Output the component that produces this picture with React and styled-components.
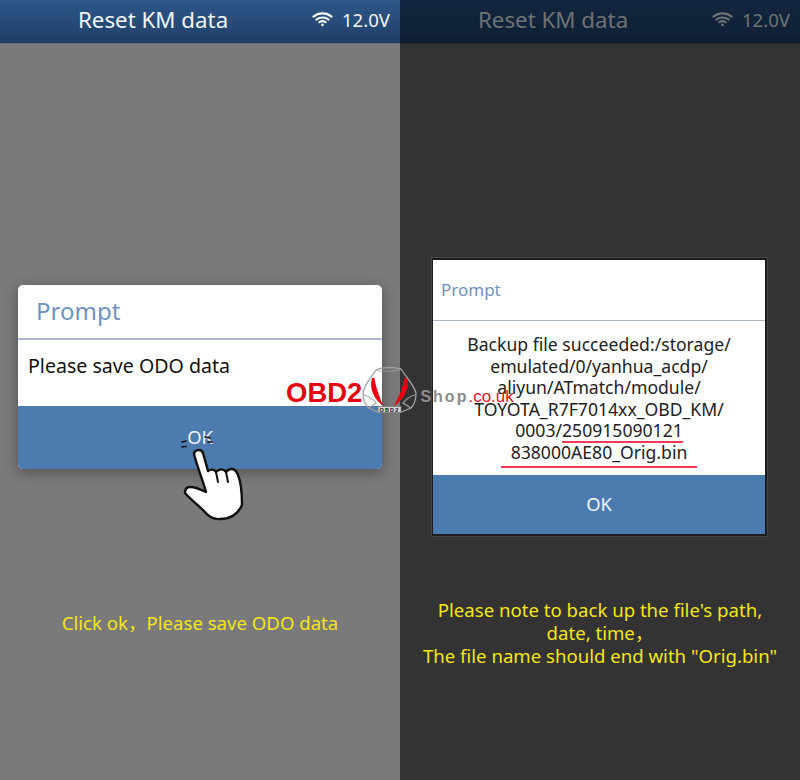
import styled, { createGlobalStyle } from "styled-components";

const Global = createGlobalStyle`
  html, body {
    margin: 0;
    padding: 0;
    background: #333;
  }
  body {
    font-family: "Noto Sans", "Noto Sans CJK SC", sans-serif;
  }
`;

const Page = styled.div`
  position: relative;
  display: flex;
  width: 800px;
  height: 780px;
  overflow: hidden;
`;

const Panel = styled.section`
  display: flex;
  flex-direction: column;
  width: 400px;
  height: 780px;
  background: ${(p) => (p.$dark ? "#333333" : "#7a7a7a")};
`;

const Header = styled.header`
  box-sizing: border-box;
  display: flex;
  align-items: center;
  height: 43px;
  padding: 0 10px 5px 78px;
  color: ${(p) => (p.$dark ? "#6f7274" : "#f2f5f8")};
  background: ${(p) =>
    p.$dark
      ? "linear-gradient(#13263f, #0f2136 80%, #0d1c2e)"
      : "linear-gradient(#2c5788, #274c79 50%, #1f3e65)"};
  box-shadow: 0 1px 0 ${(p) => (p.$dark ? "#2b2b2b" : "#6a6d72")};
`;

const Title = styled.h1`
  flex: 1;
  margin: 0;
  font-size: 22.3px;
  font-weight: 400;
`;

const Status = styled.div`
  display: flex;
  align-items: center;
  gap: 9px;
  font-size: 18.6px;
`;

const Dialog = styled.div`
  position: relative;
  display: flex;
  flex-direction: column;
  box-sizing: border-box;
  background: #fff;
`;

const LeftDialog = styled(Dialog)`
  width: 364px;
  height: 184px;
  margin: 242px 0 0 18px;
  border-radius: 5px;
  box-shadow: 0 3px 14px rgba(0, 0, 0, 0.35);
`;

const RightDialog = styled(Dialog)`
  width: 335px;
  height: 278px;
  margin: 215px 0 0 32px;
  border: 2px solid #1d1d1d;
  border-left-width: 1px;
  box-shadow: 0 0 0 1px #454545;
`;

const DialogTitle = styled.div`
  box-sizing: border-box;
  display: flex;
  align-items: center;
  color: #6f93c0;
  border-bottom: ${(p) => p.$line}px solid #a9b8cb;
  height: ${(p) => p.$h}px;
  padding: 0 0 ${(p) => p.$lift}px ${(p) => p.$pad}px;
  font-size: ${(p) => p.$size}px;
`;

const LeftBody = styled.div`
  flex: 1;
  padding: 13px 0 0 10px;
  font-size: 19.6px;
  line-height: 26px;
  color: #111;
`;

const RightBody = styled.div`
  flex: 1;
  padding-top: 13px;
  text-align: center;
  font-size: 17.6px;
  line-height: 21.5px;
  color: #222;
`;

const Underlined = styled.span`
  position: relative;

  &::after {
    content: "";
    position: absolute;
    left: ${(p) => -(p.$over || 0)}px;
    right: ${(p) => -(p.$over || 0)}px;
    bottom: ${(p) => p.$bottom}px;
    height: 2px;
    background: #ee3a56;
  }
`;

const OkButton = styled.button`
  display: block;
  width: 100%;
  border: 0;
  padding: 0 0 2px;
  color: #f1f5f9;
  background: #4c7bb0;
  font-family: inherit;
  font-size: 18.4px;
  height: ${(p) => p.$h}px;
  border-radius: ${(p) => (p.$round ? "0 0 5px 5px" : "0")};
`;

const Caption = styled.p`
  margin: 0;
  color: #f5e616;
  text-align: center;
  font-size: 18.6px;
  line-height: 23px;
`;

const LeftCaption = styled(Caption)`
  margin-top: 142px;
`;

const RightCaption = styled(Caption)`
  margin-top: 62px;
`;

const Hand = styled.svg`
  position: absolute;
  left: 147px;
  top: 135px;
`;

const Watermark = styled.div`
  position: absolute;
  left: 286px;
  top: 367px;
  display: flex;
  align-items: flex-start;
  height: 46px;
  font-family: "Liberation Sans", Arial, sans-serif;
  white-space: nowrap;
`;

const Brand = styled.span`
  color: #e60012;
  font-size: 27.5px;
  line-height: 46px;
  font-weight: 700;
  margin-top: 3px;
`;

const CarMark = styled.svg`
  flex: none;
`;

const Shop = styled.span`
  color: #8c8c8c;
  font-size: 16px;
  line-height: 46px;
  font-weight: 700;
  letter-spacing: 2px;
  margin: 7px 0 0 3px;
`;

const Domain = styled.span`
  color: #f0101e;
  font-size: 17px;
  line-height: 46px;
  margin: 7px 0 0 0;
`;

const WifiIcon = ({ color }) => (
  <svg width="21" height="16" viewBox="0 0 22 16" fill="none" stroke={color} strokeWidth="2.2" strokeLinecap="round">
    <path d="M1.5 5.5C7 1 15 1 20.5 5.5" />
    <path d="M4.5 8.6C8.2 5.6 13.8 5.6 17.5 8.6" />
    <path d="M7.6 11.4C9.6 10 12.4 10 14.4 11.4" />
    <circle cx="11" cy="14.2" r="1.4" fill={color} stroke="none" />
  </svg>
);

const CarLogo = () => (
  <CarMark width="55" height="46" viewBox="0 0 55 46" fill="none">
    <path
      d="M1 26C2 18 9 11 14 3C19 0 33 0 39 2C44 10 52 18 54 26C54 33 52 38 49 41L39 45H16L7 41C3 38 1 32 1 26Z"
      stroke="#a3a3a3"
      strokeWidth="1.3"
    />
    <path d="M14 3C22 5 32 5 39 2" stroke="#a3a3a3" strokeWidth="0.8" />
    <path d="M2 28C6 29 10 31 14 36L7 41M53 28C49 29 45 31 41 36L49 41" stroke="#a3a3a3" strokeWidth="1.2" />
    <path d="M10 11C7 22 12 32 21 39C18 30 14 22 12.5 11Z" fill="#e60012" />
    <path d="M45 11C48 22 42 32 32 39C36 30 41 22 42.5 11Z" fill="#e60012" />
    <rect x="16" y="39.5" width="23" height="6" fill="#d4d4d4" stroke="#777" strokeWidth="0.7" />
    <text x="27.5" y="44.8" textAnchor="middle" fontSize="5.5" fontWeight="700" fontFamily="Liberation Sans" letterSpacing="1.2" fill="#111">
      OBD2
    </text>
  </CarMark>
);

const App = () => (
  <>
    <Global />
    <Page>
      <Panel>
        <Header>
          <Title>Reset KM data</Title>
          <Status>
            <WifiIcon color="#f2f5f8" />
            12.0V
          </Status>
        </Header>
        <LeftDialog>
          <DialogTitle $h={55} $pad={18} $size={24} $line={2} $lift={3}>
            Prompt
          </DialogTitle>
          <LeftBody>Please save ODO data</LeftBody>
          <OkButton $h={63} $round>
            OK
          </OkButton>
          <Hand width="90" height="105" viewBox="0 0 90 105">
            <path
              d="M29 34C29 30 36 28 38 33L43 51C46 49 49 49 51 52C54 49 58 48 61 52C64 48 70 47 73 55C76 62 77 72 77 85C73 94 66 99 55 99C47 100 42 95 38 90C32 84 25 79 20 73C20 69 22 67 25 67C30 67 37 70 41 72C37 58 32 46 29 34Z"
              fill="#fff"
              stroke="#111"
              strokeWidth="2.4"
              strokeLinejoin="round"
            />
            <path d="M51 52L53 62M61 52L63 62" stroke="#111" strokeWidth="2" strokeLinecap="round" />
            <path d="M17 22L21 21M17 27L21 26.5M40 17L45 18M43 22L47 22" stroke="#111" strokeWidth="1.6" strokeLinecap="round" />
          </Hand>
        </LeftDialog>
        <LeftCaption>Click ok，Please save ODO data</LeftCaption>
      </Panel>
      <Panel $dark>
        <Header $dark>
          <Title>Reset KM data</Title>
          <Status>
            <WifiIcon color="#6f7274" />
            12.0V
          </Status>
        </Header>
        <RightDialog>
          <DialogTitle $h={61} $pad={8} $size={17} $line={1} $lift={1}>
            Prompt
          </DialogTitle>
          <RightBody>
            Backup file succeeded:/storage/
            <br />
            emulated/0/yanhua_acdp/
            <br />
            aliyun/ATmatch/module/
            <br />
            TOYOTA_R7F7014xx_OBD_KM/
            <br />
            0003/<Underlined $bottom={-1}>250915090121</Underlined>
            <br />
            <Underlined $over={10} $bottom={-4}>
              838000AE80_Orig.bin
            </Underlined>
          </RightBody>
          <OkButton $h={59}>OK</OkButton>
        </RightDialog>
        <RightCaption>
          Please note to back up the file's path,
          <br />
          date, time，
          <br />
          The file name should end with "Orig.bin"
        </RightCaption>
      </Panel>
      <Watermark>
        <Brand>OBD2</Brand>
        <CarLogo />
        <Shop>Shop</Shop>
        <Domain>.co.uk</Domain>
      </Watermark>
    </Page>
  </>
);

export default App;
